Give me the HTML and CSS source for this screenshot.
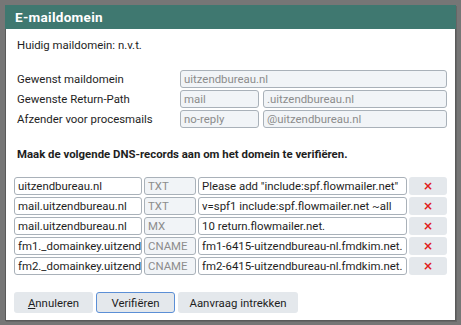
FILE: index.html
```html
<!DOCTYPE html>
<html lang="nl">
<head>
<meta charset="utf-8">
<title>E-maildomein</title>
<link rel="stylesheet" href="styles.css">
</head>
<body>
<div class="dialog">
  <div class="titlebar">E-maildomein</div>
  <div class="content">
    <p class="current">Huidig maildomein: n.v.t.</p>
    <div class="form">
      <label class="lbl">Gewenst maildomein</label>
      <div class="field"><span class="inp ro grow">uitzendbureau.nl</span></div>
      <label class="lbl">Gewenste Return-Path</label>
      <div class="field split"><span class="inp ro">mail</span><span class="inp ro">.uitzendbureau.nl</span></div>
      <label class="lbl">Afzender voor procesmails</label>
      <div class="field split"><span class="inp ro">no-reply</span><span class="inp ro">@uitzendbureau.nl</span></div>
    </div>
    <p class="instr">Maak de volgende DNS-records aan om het domein te verifiëren.</p>
    <div class="dns">
      <span class="inp">uitzendbureau.nl</span><span class="inp ro">TXT</span><span class="inp">Please add "include:spf.flowmailer.net"</span><button class="del">×</button>
      <span class="inp">mail.uitzendbureau.nl</span><span class="inp ro">TXT</span><span class="inp">v=spf1 include:spf.flowmailer.net ~all</span><button class="del">×</button>
      <span class="inp">mail.uitzendbureau.nl</span><span class="inp ro">MX</span><span class="inp">10 return.flowmailer.net.</span><button class="del">×</button>
      <span class="inp">fm1._domainkey.uitzendbureau.nl</span><span class="inp ro">CNAME</span><span class="inp">fm1-6415-uitzendbureau-nl.fmdkim.net.</span><button class="del">×</button>
      <span class="inp">fm2._domainkey.uitzendbureau.nl</span><span class="inp ro">CNAME</span><span class="inp">fm2-6415-uitzendbureau-nl.fmdkim.net.</span><button class="del">×</button>
    </div>
    <div class="actions">
      <button class="btn"><u>A</u>nnuleren</button>
      <button class="btn focus">Verifiëren</button>
      <button class="btn btn-long">Aanvraag intrekken</button>
    </div>
  </div>
</div>
</body>
</html>
```
FILE: styles.css
```css
* { box-sizing: border-box; }
html, body { margin: 0; padding: 0; }
body {
  background: #767676;
  padding: 5px;
  font-family: Roboto, "Liberation Sans", sans-serif;
  font-size: 11.4px;
  color: #1e1e1e;
}
.dialog {
  width: 451px;
  height: 316px;
  background: #fff;
  border: 1px solid #5a5a5a;
  border-top: 0;
  box-shadow: 1px 1px 0 #666;
}
.titlebar {
  height: 24px;
  margin: 0 -1px;
  background: #3f7870;
  color: #fff;
  font-weight: bold;
  font-size: 13.5px;
  letter-spacing: 0.3px;
  line-height: 24px;
  padding-left: 10px;
}
.content {
  padding: 8px 7px 0 8px;
}
p { margin: 0; }
.current {
  line-height: 16px;
  padding-left: 3px;
}
.form {
  margin-top: 17px;
  display: grid;
  grid-template-columns: 166px 267px;
  row-gap: 2px;
}
.lbl {
  padding-left: 3px;
  line-height: 18px;
}
.field { display: flex; gap: 4px; }
.split .inp:first-child { width: 79px; flex: none; }
.split .inp:last-child { flex: 1; }
.grow { flex: 1; }
.inp {
  display: block;
  height: 18px;
  border: 1px solid #a9b1b9;
  border-radius: 3px;
  background: #fff;
  padding: 0 3px;
  line-height: 16px;
  white-space: nowrap;
  overflow: hidden;
  color: #1e1e1e;
}
.inp.ro {
  background: #f1f4f7;
  color: #8c8c8c;
}
.instr {
  margin-top: 18px;
  padding-left: 3px;
  line-height: 16px;
  font-weight: bold;
}
.dns {
  margin-top: 15px;
  display: grid;
  grid-template-columns: 128px 52px 209px 38px;
  column-gap: 2px;
  row-gap: 2px;
}
.del {
  height: 18px;
  border: 0;
  border-radius: 3px;
  background: #e4e8ec;
  color: #e0201c;
  font-family: "DejaVu Sans", sans-serif;
  font-size: 12px;
  font-weight: bold;
  line-height: 18px;
  padding: 0;
}
.actions {
  margin-top: 17px;
  display: flex;
  gap: 3px;
}
.btn {
  width: 79px;
  height: 21px;
  border: 1px solid transparent;
  border-radius: 3px;
  background: #e4e8ec;
  font-family: inherit;
  font-size: 11.4px;
  color: #1e1e1e;
  padding: 0;
}
.btn.focus { border-color: #5b8fd6; }
.btn.btn-long { width: 120px; }
```
